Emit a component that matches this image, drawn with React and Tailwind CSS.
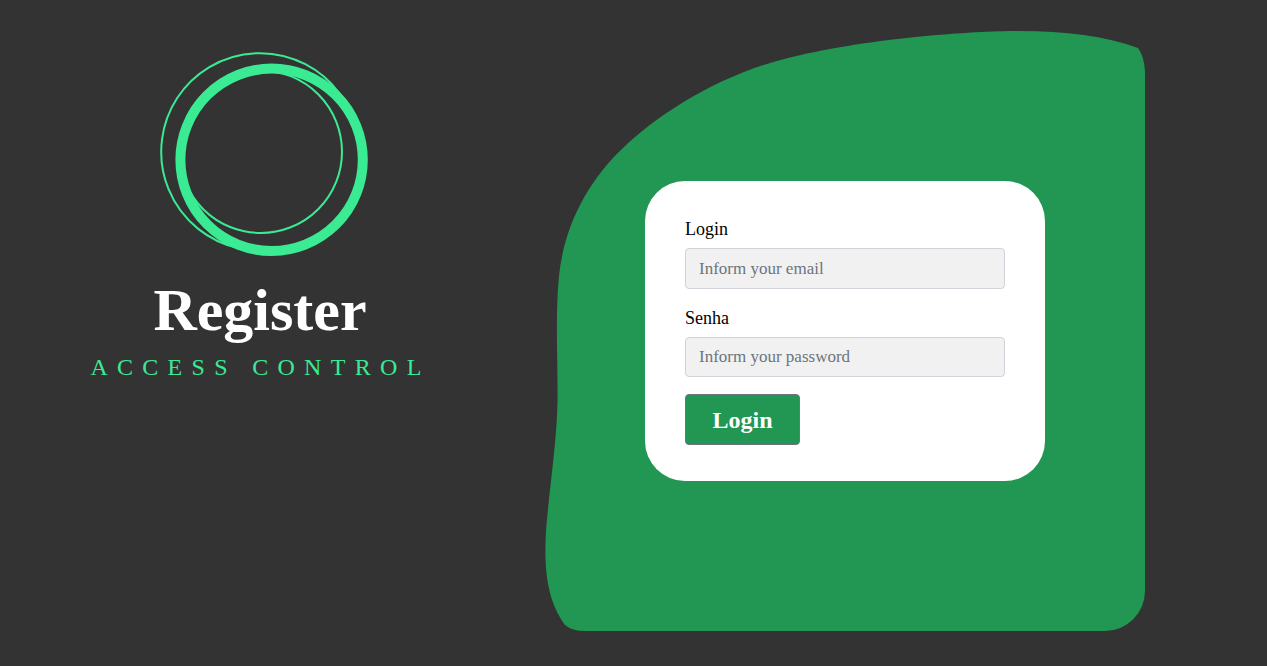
export default function App() {
  return (
    <main className="flex h-[666px] w-full overflow-hidden bg-[#333333] font-['Liberation_Serif',serif]">
      <section className="flex w-[520px] shrink-0 flex-col items-center pt-[52px]">
        <svg className="ml-2 h-[204px] w-[208px]" viewBox="160 52 208 204" fill="none" stroke="#3aeb94">
          <path d="M238 248.100A98.700 98.700 0 1 1 339 92.800" strokeWidth="2" />
          <circle cx="271.600" cy="159.800" r="91.200" strokeWidth="10" />
          <circle cx="260.700" cy="151.700" r="81.300" strokeWidth="2" />
        </svg>
        <h1 className="mt-[20px] text-[60px] leading-[68px] font-bold text-white">Register</h1>
        <p className="mt-[9px] ml-px text-[24px] leading-[28px] tracking-[9.3px] whitespace-nowrap text-[#3aeb94]">ACCESS CONTROL</p>
      </section>
      <section className="relative isolate ml-[25px] mt-[31px] flex h-[600px] w-[600px] shrink-0 items-center justify-center">
        <svg className="absolute inset-0 -z-10 h-[600px] w-[600px]" viewBox="0 0 600 600" fill="#229653">
          <path d="M593 17C560 5 520 0 475 0C430 0 330 6 245 26.500C175 43 112 84 78 117C42 151 19 196 14 245C10 285 13 330 12.500 370C12 410 4 460 1 500C-1 535 1 568 20 594Q27 600 40 600H560A40 40 0 0 0 600 560V40Q599 25 593 17Z" />
        </svg>
        <form className="flex h-[300px] w-[400px] flex-col items-start rounded-[40px] bg-white px-10 pt-9" onSubmit={(e) => e.preventDefault()}>
          <label htmlFor="login" className="text-[18px] leading-6 text-black">Login</label>
          <input id="login" type="email" placeholder="Inform your email" className="mt-[7px] h-[41px] w-full rounded border border-[#ced4da] bg-[#f1f1f1] px-[13px] text-[17px] placeholder:text-[#6c757d]" />
          <label htmlFor="password" className="mt-[17px] text-[18px] leading-6 text-black">Senha</label>
          <input id="password" type="password" placeholder="Inform your password" className="mt-[7px] h-[40px] w-full rounded border border-[#ced4da] bg-[#f1f1f1] px-[13px] text-[17px] placeholder:text-[#6c757d]" />
          <button type="submit" className="mt-[17px] h-[51px] w-[115px] rounded border border-[#6c757d] bg-[#229653] text-[24px] leading-none font-bold text-white">Login</button>
        </form>
      </section>
    </main>
  );
}
